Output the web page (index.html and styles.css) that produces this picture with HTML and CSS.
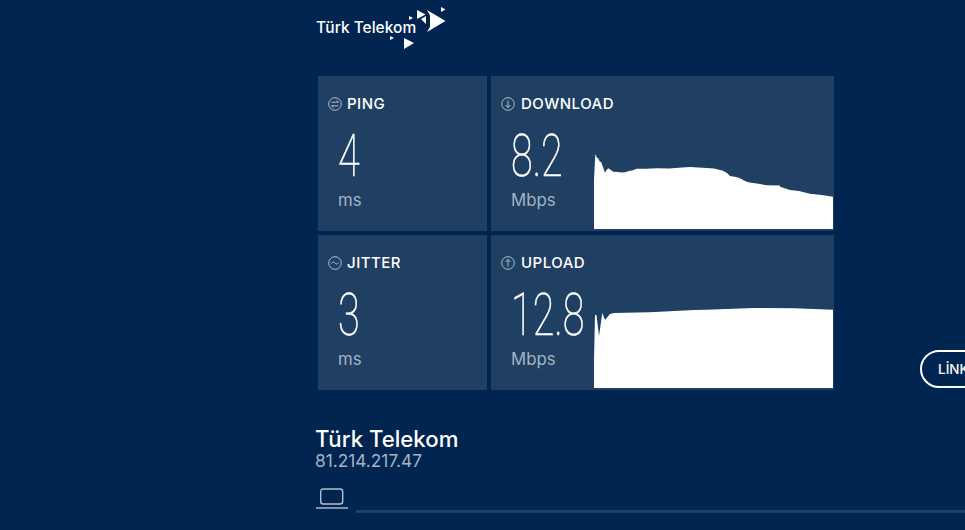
FILE: index.html
```html
<!DOCTYPE html>
<html lang="tr">
<head>
  <meta charset="UTF-8">
  <meta name="viewport" content="width=device-width, initial-scale=1.0">
  <title>Türk Telekom Hız Testi</title>
  <link rel="stylesheet" href="styles.css">
</head>
<body>
  <div class="page">
    <header class="logo">
      <span class="logo-text">Türk Telekom</span>
      <svg class="logo-mark" width="60" height="46" viewBox="0 0 60 46">
        <path fill="#fff" d="M51 1l4.500 2.500L51 6zM27 4l8.500 4.500L27 13zM37 4l18.500 11L37 26l3-5V9.500zM19 10l4 2-4 2zM31 13l5-3v8zM0 30l4 2-4 2zM14 32l10 5-10 6z"/>
      </svg>
    </header>

    <section class="grid">
      <div class="card">
        <h2 class="card-title">
          <svg class="icon" viewBox="0 0 14 14"><circle cx="7" cy="7" r="6.300"/><path d="M3.500 5.200h7M8.500 3.400l2 1.800M10.500 8.800h-7M5.500 10.600l-2-1.800"/></svg>
          PING
        </h2>
        <div class="card-value">
          <span class="num">4</span>
          <span class="unit">ms</span>
        </div>
      </div>

      <div class="card card-wide">
        <h2 class="card-title">
          <svg class="icon" viewBox="0 0 14 14"><circle cx="7" cy="7" r="6.300"/><path d="M7 3.500v7M4.500 8L7 10.500 9.500 8"/></svg>
          DOWNLOAD
        </h2>
        <div class="card-value">
          <span class="num">8.2</span>
          <span class="unit">Mbps</span>
        </div>
        <svg class="graph" width="239" height="83" viewBox="0 0 239 83">
          <path fill="#fff" d="M0 83V34L1.300 8 3 12 4 12 6 16 7 15.700 9 21 11 26.700 12.500 24 14.300 22.300 17 24 19 25.700 24 26 28 26.500 31 26.300 35 25 39 24.300 42.700 22.700 52 22.800 62.700 22.300 75 22.400 88 21.500 96 21 104 21.500 112.700 22 120 22.600 129 24.700 133 27 136 30 142 31 146 32.300 150 34.500 154 36.300 163 37.500 172.700 39.300 186 39.500 186 40.700 196 44 205 45 216 47.700 228 49 239 50.700V83Z"/>
        </svg>
      </div>

      <div class="card">
        <h2 class="card-title">
          <svg class="icon" viewBox="0 0 14 14"><circle cx="7" cy="7" r="6.300"/><path d="M3.500 7.500C4.500 5.500 6 5.500 7 7s2.500 1.500 3.500-.5"/></svg>
          JITTER
        </h2>
        <div class="card-value">
          <span class="num">3</span>
          <span class="unit">ms</span>
        </div>
      </div>

      <div class="card card-wide">
        <h2 class="card-title">
          <svg class="icon" viewBox="0 0 14 14"><circle cx="7" cy="7" r="6.300"/><path d="M7 10.500v-7M4.500 6L7 3.500 9.500 6"/></svg>
          UPLOAD
        </h2>
        <div class="card-value">
          <span class="num">12.8</span>
          <span class="unit">Mbps</span>
        </div>
        <svg class="graph" width="239" height="83" viewBox="0 0 239 83">
          <path fill="#fff" d="M0 83V55L1 10 2.500 10 5 31 8.300 8 11 15 16 9 20 8 56 7.300 100 5 112 4.700 160 3 200 3.200 239 4.700V83Z"/>
        </svg>
      </div>
    </section>

    <section class="isp">
      <div class="isp-name">Türk Telekom</div>
      <div class="isp-ip">81.214.217.47</div>
    </section>

    <div class="device">
      <svg class="laptop" width="32" height="21" viewBox="0 0 32 21">
        <rect x="4.700" y="1" width="22" height="15" rx="2.500"/>
        <path d="M0 20h32"/>
      </svg>
      <div class="device-line"></div>
    </div>
  </div>

  <a class="link-btn" href="#">LİNK</a>
</body>
</html>
```
FILE: styles.css
```css
html, body {
  margin: 0;
  padding: 0;
  height: 100%;
  overflow: hidden;
}

body {
  background: #002550;
  color: #fff;
  font-family: Inter, "Noto Sans", sans-serif;
}

.page {
  padding-left: 316px;
}

.logo {
  display: flex;
  height: 76px;
  position: relative;
}

.logo-text {
  margin-top: 18px;
  font-size: 15.500px;
  font-weight: 500;
  line-height: 20px;
}

.logo-mark {
  position: absolute;
  left: 74px;
  top: 6px;
}

.grid {
  display: grid;
  grid-template-columns: 169px 343px;
  grid-template-rows: 155px 155px;
  gap: 4px;
  margin-left: 2px;
}

.card {
  background: #1f3f63;
  display: grid;
  grid-template-rows: 56px 1fr;
  grid-template-columns: 103px 1fr;
}

.card-title {
  grid-column: 1 / 3;
  grid-row: 1;
  display: flex;
  align-items: center;
  gap: 5px;
  margin: 0;
  padding: 0 0 0 10px;
  font-size: 15px;
  font-weight: 500;
  letter-spacing: 0.5px;
  height: 55px;
}

.card-wide .card-title {
  gap: 6px;
}

.icon {
  width: 14px;
  height: 14px;
  fill: none;
  stroke: #b3bfcd;
  stroke-width: 1;
}

.card-value {
  grid-column: 1;
  grid-row: 2;
  display: flex;
  flex-direction: column;
  padding-left: 20px;
}

.num {
  display: block;
  font-family: Roboto, sans-serif;
  font-weight: 100;
  font-size: 59px;
  line-height: 46px;
  margin-top: 1px;
  margin-bottom: 11px;
  -webkit-text-stroke: 0.6px #fff;
  transform: scaleX(0.67);
  transform-origin: left center;
  white-space: nowrap;
}

.unit {
  font-size: 16.800px;
  line-height: 20px;
  color: #a5b3c4;
}

.graph {
  grid-column: 2;
  grid-row: 1 / 3;
  align-self: end;
  margin-bottom: 2px;
}

.isp {
  margin-top: 38px;
  margin-left: -1px;
}

.isp-name {
  font-size: 22.200px;
  font-weight: 500;
  line-height: 22px;
}

.isp-ip {
  font-size: 17.300px;
  line-height: 22px;
  color: #a5b3c4;
}

.device {
  display: flex;
  align-items: flex-end;
  gap: 8px;
  margin-top: 16px;
}

.laptop {
  fill: none;
  stroke: #b3bfcd;
  stroke-width: 1.400;
}

.device-line {
  flex: 1;
  height: 3px;
  margin-bottom: -4px;
  background: #1f3f63;
}

.link-btn {
  position: absolute;
  left: 920px;
  top: 350px;
  box-sizing: border-box;
  width: 110px;
  height: 38px;
  padding-left: 16px;
  border: 2px solid #fff;
  border-radius: 19px;
  color: #fff;
  font-size: 13.500px;
  font-weight: 500;
  line-height: 34px;
  text-decoration: none;
}
```
